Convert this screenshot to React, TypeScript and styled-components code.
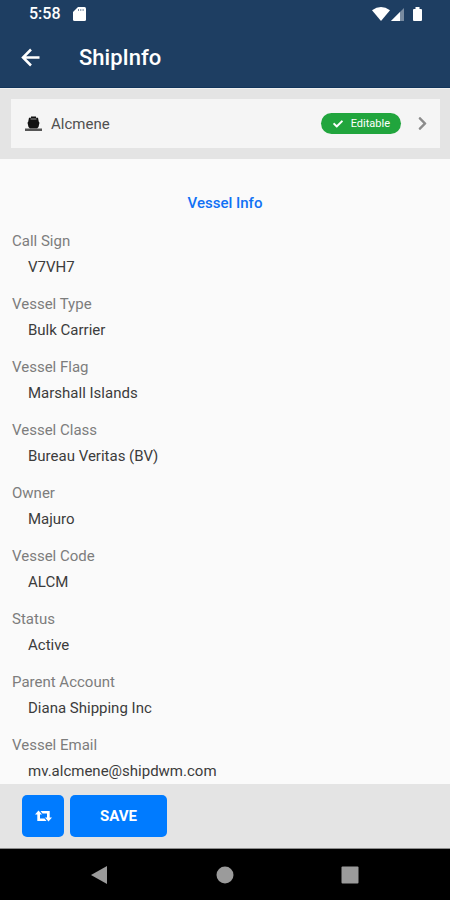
import React from "react";
import styled, { createGlobalStyle } from "styled-components";
import { FaCheck, FaChevronRight } from "react-icons/fa";

const GlobalStyle = createGlobalStyle`
  * { box-sizing: border-box; }
  body { margin: 0; background: #fafafa; font-family: Roboto, sans-serif; }
  button { font-family: inherit; border: 0; padding: 0; cursor: pointer; }
  svg { display: block; flex: none; }
`;

const Screen = styled.div`
  display: flex;
  flex-direction: column;
  height: 100vh;
`;

const Header = styled.header`
  flex: none;
  background: #1e3e62;
  color: #fff;
  border-bottom: 1px solid #12355b;
`;

const StatusBar = styled.div`
  display: flex;
  align-items: center;
  height: 28px;
  padding: 0 26px 0 29px;
`;

const Clock = styled.time`
  font-size: 16px;
  font-weight: 500;
  line-height: 28px;
  margin-right: 12px;
`;

const StatusIcons = styled.div`
  display: flex;
  align-items: center;
  margin-left: auto;
`;

const TitleBar = styled.div`
  display: flex;
  align-items: center;
  height: 59px;
  padding: 0 20px;
  gap: 38px;
`;

const BackButton = styled.button`
  background: none;
  color: inherit;
`;

const Title = styled.h1`
  margin: 0;
  font-size: 22px;
  line-height: 28px;
  font-weight: 500;
`;

const VesselBar = styled.section`
  flex: none;
  padding: 10px 10px 11px 11px;
  background: #e4e4e4;
  border-top: 1px solid #f0f0f0;
`;

const VesselRow = styled.button`
  display: flex;
  align-items: center;
  width: 100%;
  height: 49px;
  padding: 0 10px 0 14px;
  background: #f5f5f5;
  text-align: left;
`;

const VesselName = styled.span`
  flex: 1;
  margin-left: 9px;
  font-size: 15px;
  line-height: 20px;
  color: #505050;
`;

const Badge = styled.span`
  display: flex;
  align-items: center;
  gap: 8px;
  height: 21px;
  margin-right: 14px;
  padding: 0 11px 0 12px;
  border-radius: 11px;
  background: #21a53d;
  color: #fff;
  font-size: 11px;
`;

const Details = styled.main`
  flex: 1;
  min-height: 0;
  overflow: hidden;
  padding: 32px 12px 0;
`;

const SectionTitle = styled.h2`
  margin: 0 0 13px;
  font-size: 15px;
  line-height: 24px;
  font-weight: 500;
  text-align: center;
  color: #1071f5;
`;

const Fields = styled.dl`
  display: flex;
  flex-direction: column;
  gap: 11px;
  margin: 0;
  font-size: 15px;
  line-height: 26px;
`;

const Label = styled.dt`
  color: #7d7d7d;
`;

const Value = styled.dd`
  margin: 0 0 0 16px;
  color: #3c3c3c;
`;

const Actions = styled.footer`
  flex: none;
  display: flex;
  gap: 6px;
  padding: 11px 22px 11px;
  background: #e4e4e4;
  border-bottom: 1px solid #8c8c8c;
`;

const ActionButton = styled.button<{ $wide?: boolean }>`
  display: flex;
  align-items: center;
  justify-content: center;
  width: ${({ $wide }) => ($wide ? "97px" : "42px")};
  height: 42px;
  border-radius: 5px;
  background: #007bff;
  color: #fff;
  font-size: 15px;
  font-weight: 700;
`;

const SystemNav = styled.nav`
  flex: none;
  display: flex;
  align-items: center;
  justify-content: center;
  gap: 107px;
  height: 51px;
  background: #000;
`;

const NavButton = styled.button`
  background: none;
  color: #9b9b9b;
`;

const fields: [string, string][] = [
  ["Call Sign", "V7VH7"],
  ["Vessel Type", "Bulk Carrier"],
  ["Vessel Flag", "Marshall Islands"],
  ["Vessel Class", "Bureau Veritas (BV)"],
  ["Owner", "Majuro"],
  ["Vessel Code", "ALCM"],
  ["Status", "Active"],
  ["Parent Account", "Diana Shipping Inc"],
  ["Vessel Email", "mv.alcmene@shipdwm.com"],
];

const CardIcon = () => (
  <svg width="13" height="16" viewBox="0 0 13 16" fill="#fff" aria-hidden="true">
    <path d="M5 1h6.500Q13 1 13 2.500v11Q13 15 11.500 15h-10Q0 15 0 13.500V6z" />
    <path d="M5.500 3v2M7.800 3v2M10.100 3v2" stroke="#1e3e62" strokeWidth="1" opacity="0.6" />
  </svg>
);

const SignalIcons = () => (
  <svg width="52" height="18" viewBox="0 0 52 18" fill="#fff" aria-hidden="true">
    <path d="M0 5.200Q9 -1 18 5.200L9 16z" />
    <path d="M32 3v13H19z" opacity="0.4" />
    <path d="M28 7v9h-9z" />
    <path d="M43.500 2h4v2h1.500q1 0 1 1v10q0 1-1 1h-7q-1 0-1-1V5q0-1 1-1h1.500z" />
  </svg>
);

const BackIcon = () => (
  <svg width="21" height="20" viewBox="0 0 21 20" fill="none" stroke="#fff" strokeWidth="2.500" aria-hidden="true">
    <path d="M19.500 9.500H4M11 1.500l-8 8 8 8" />
  </svg>
);

const ShipIcon = () => (
  <svg width="17" height="16" viewBox="0 0 17 16" aria-hidden="true">
    <path d="M6 .5h5v1.300h2l.8 4 .7 1-1 4.200-1.500 1.500h-7L3.500 11l-1-4.200.7-1 .8-4h2z" fill="#111" />
    <path d="M5.500 3h6" stroke="#999" strokeWidth="1" />
    <path d="M0 12.500h17v2.500H0z" fill="#555" />
  </svg>
);

const SwapIcon = () => (
  <svg width="17" height="12" viewBox="0 0 17 12" fill="#fff" aria-hidden="true">
    <path d="M3.500 0.500 7 4.500H5v3.900h4.500l2 2.600H2.300V4.500H0z" />
    <path d="M13.500 11.500 10 7.500h2V3.600H7.500L5.500 1h9.200v6.500H17z" />
  </svg>
);

export default function App() {
  return (
    <>
      <GlobalStyle />
      <Screen>
        <Header>
          <StatusBar>
            <Clock>5:58</Clock>
            <CardIcon />
            <StatusIcons>
              <SignalIcons />
            </StatusIcons>
          </StatusBar>
          <TitleBar>
            <BackButton aria-label="Back">
              <BackIcon />
            </BackButton>
            <Title>ShipInfo</Title>
          </TitleBar>
        </Header>

        <VesselBar>
          <VesselRow>
            <ShipIcon />
            <VesselName>Alcmene</VesselName>
            <Badge>
              <FaCheck size={10} aria-hidden="true" />
              Editable
            </Badge>
            <FaChevronRight size={15} color="#8c8c8c" aria-hidden="true" />
          </VesselRow>
        </VesselBar>

        <Details>
          <SectionTitle>Vessel Info</SectionTitle>
          <Fields>
            {fields.map(([label, value]) => (
              <div key={label}>
                <Label>{label}</Label>
                <Value>{value}</Value>
              </div>
            ))}
          </Fields>
        </Details>

        <Actions>
          <ActionButton aria-label="Refresh">
            <SwapIcon />
          </ActionButton>
          <ActionButton $wide>SAVE</ActionButton>
        </Actions>

        <SystemNav aria-label="System">
          <NavButton aria-label="Back">
            <svg width="18" height="20" viewBox="0 0 18 20" fill="currentColor">
              <path d="M16 1v18L0 10z" />
            </svg>
          </NavButton>
          <NavButton aria-label="Home">
            <svg width="18" height="18" viewBox="0 0 18 18" fill="currentColor">
              <circle cx="9" cy="9" r="8.500" />
            </svg>
          </NavButton>
          <NavButton aria-label="Recent apps">
            <svg width="18" height="18" viewBox="0 0 18 18" fill="currentColor">
              <rect x="0.500" y="0.500" width="17" height="17" rx="1" />
            </svg>
          </NavButton>
        </SystemNav>
      </Screen>
    </>
  );
}
